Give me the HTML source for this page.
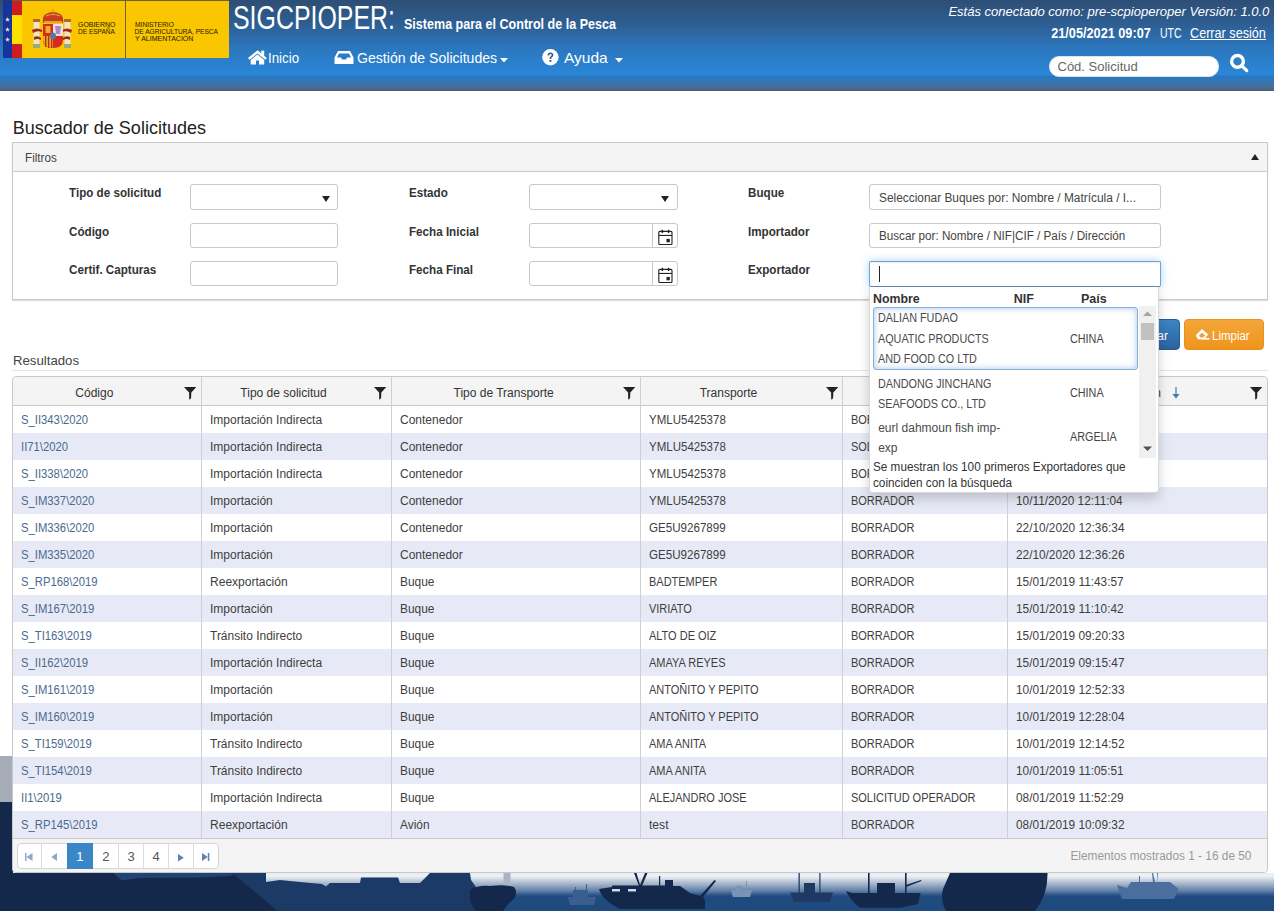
<!DOCTYPE html>
<html><head><meta charset="utf-8">
<style>
*{box-sizing:border-box}
html,body{margin:0;padding:0}
body{width:1274px;height:911px;overflow:hidden;position:relative;background:#fff;font-family:"Liberation Sans",sans-serif;color:#333}
.abs{position:absolute}
.t{position:absolute;white-space:nowrap;line-height:1}
svg{position:absolute;overflow:visible}
</style></head><body>
<div class="abs" style="left:0px;top:0px;width:1274px;height:911px;background:#fff"></div>
<svg style="left:0;top:740px" width="1274" height="171" viewBox="0 740 1274 171">
<defs>
<linearGradient id="sea" gradientUnits="userSpaceOnUse" x1="0" y1="873" x2="0" y2="897">
<stop offset="0" stop-color="#e9ecef"/>
<stop offset="0.125" stop-color="#eef2f8"/>
<stop offset="0.208" stop-color="#dde3eb"/>
<stop offset="0.333" stop-color="#c0cad8"/>
<stop offset="0.542" stop-color="#90a4c0"/>
<stop offset="0.75" stop-color="#5f7fa6"/>
<stop offset="0.917" stop-color="#2c5389"/>
<stop offset="1" stop-color="#1f4a7e"/>
</linearGradient>
</defs>
<rect x="0" y="873" width="1274" height="38" fill="url(#sea)"/>
<rect x="0" y="756" width="13" height="46" fill="#a5acb8"/>
<rect x="0" y="802" width="13" height="109" fill="#13284a"/>
<!-- left buildings light navy -->
<path d="M0,873 L256,873 L266,873 L266,882 L280,880 L300,882 L322,884 L326,886.5 L330,883 L360,883 L361,877.5 L398,877.5 L400,883 L420,883 L430,873 L470,873 L471,880 L476,887 L480,911 L0,911 Z" fill="#1b3a66"/>
<path d="M0,873 L232,873 L277.5,911 L0,911 Z" fill="#13284a"/>
<path d="M113,873 L236,873 L230,876 L200,877.5 L140,878 L122,880.5 Z" fill="#1f4474"/>
<!-- dark rock with lighthouse -->
<rect x="503.5" y="873" width="7" height="15" fill="#a9b4c4"/>
<path d="M470,890 Q478,885 490,886 Q505,884 514,887 Q518,892 514,899 Q508,903 503,911 L476,911 Q470,905 470,898 Z" fill="#13284a"/>
<!-- faint ships -->
<path d="M568,897 L596,897 L594,905 L570,905 Z M573,890 L588,890 L588,897 L573,897 Z M575,887 L576,887 L576,897 L575,897 Z M586,884 L587,884 L587,897 L586,897 Z" fill="#3a5e90"/>
<path d="M731,890 L752,890 L750,897 L733,897 Z M746,881 L747,881 L747,890 L746,890 Z M736,886 L742,886 L742,890 L736,890 Z" fill="#7a94b8"/>
<!-- big ship -->
<path d="M599,889 L612,887 L612,885.5 L665,885.5 L665,880 L673,880 L673,886 L680,886 L690,893 L700,896 L714.5,880 L716,881 L703,897 L705,900 L705,909 L620,909 Q602,900 599,889 Z" fill="#13284a"/>
<path d="M634,873 L636.5,873 L640,885 L645,873 L647.5,873 L642,886 L639,886 Z" fill="#13284a"/>
<rect x="659" y="876" width="1.2" height="10" fill="#13284a"/>
<rect x="612" y="889" width="8" height="2.5" fill="#cfd8e4"/>
<rect x="628" y="889" width="8" height="2.5" fill="#cfd8e4"/>
<!-- boat 1 -->
<path d="M790,892.5 L833,892.5 L830,901.7 L794,901.7 Z M804,883 L815,883 L815,892.5 L804,892.5 Z" fill="#1e3a64"/>
<rect x="798.5" y="873" width="1.3" height="20" fill="#1e3a64"/>
<rect x="819.3" y="873" width="1.2" height="20" fill="#1e3a64"/>
<!-- boat 2 -->
<path d="M846,891 L852,893 L920.6,893 L918,904 L900,907.8 L860,907.8 Q850,900 846,891 Z M877,883 L895,883 L895,893 L877,893 Z" fill="#13284a"/>
<rect x="868" y="873" width="1.6" height="20" fill="#13284a"/>
<rect x="905" y="873" width="1.6" height="20" fill="#13284a"/>
<path d="M906,885 L921,880 L921.5,881 L906,887 Z" fill="#13284a"/>
<!-- big bow -->
<path d="M950,873 L1047.5,873 Q1048,895 1035,911 L946,911 Q940,900 943,889 Z" fill="#13284a"/>
<!-- faint ship right -->
<path d="M1117,885 L1127,888 L1131,882 L1170,882 L1178.6,889 L1174,899 L1122,899 Z M1152,873 L1153,873 L1155,882 L1153,882 Z M1157,873 L1158,873 L1157,882 Z M1139,876 L1140,876 L1140,882 L1139,882 Z" fill="#4a6e9e"/>
</svg>
<div class="abs" style="left:0px;top:0px;width:1274px;height:91px;background:linear-gradient(to bottom,#2e4e74 0px,#2e5f94 25px,#2b78c0 50px,#2a87d8 75px,#2678c4 76px,#3f73a8 84px,#4a6a90 89px,#505a66 90px,#505a66 91px)"></div>
<div class="abs" style="left:3px;top:0px;width:226px;height:58px;background:#f9c600;border-top:1px solid #6a6230"></div>
<div class="abs" style="left:3px;top:0px;width:9px;height:58px;background:#17349c;border-top:1px solid #303858"></div>
<div class="abs" style="left:12px;top:1px;width:10px;height:14px;background:#cf1c20"></div>
<div class="abs" style="left:12px;top:15px;width:10px;height:29px;background:#fde000"></div>
<div class="abs" style="left:12px;top:44px;width:10px;height:14px;background:#cf1c20"></div>
<div class="abs" style="left:125px;top:1px;width:1px;height:57px;background:#6a6230"></div>
<svg style="left:5px;top:16.5px" width="5" height="5" viewBox="0 0 10 10"><polygon points="5,0 6.2,3.6 10,3.7 7,6 8.1,9.6 5,7.5 1.9,9.6 3,6 0,3.7 3.8,3.6" fill="#e0e8c8"/></svg>
<svg style="left:5px;top:26.5px" width="5" height="5" viewBox="0 0 10 10"><polygon points="5,0 6.2,3.6 10,3.7 7,6 8.1,9.6 5,7.5 1.9,9.6 3,6 0,3.7 3.8,3.6" fill="#e0e8c8"/></svg>
<svg style="left:5px;top:36.5px" width="5" height="5" viewBox="0 0 10 10"><polygon points="5,0 6.2,3.6 10,3.7 7,6 8.1,9.6 5,7.5 1.9,9.6 3,6 0,3.7 3.8,3.6" fill="#e0e8c8"/></svg>
<svg style="left:32px;top:8px" width="42" height="42" viewBox="0 0 42 42">
<rect x="1.5" y="13" width="6" height="26" fill="#efe4c4"/>
<rect x="32.5" y="13" width="6" height="26" fill="#efe4c4"/>
<rect x="1" y="11" width="7" height="3" fill="#b06a30"/>
<rect x="32" y="11" width="7" height="3" fill="#b06a30"/>
<rect x="1" y="36" width="7" height="4" fill="#98ac80"/>
<rect x="32" y="36" width="7" height="4" fill="#98ac80"/>
<path d="M0,22 Q5,19 10,22 L10,24 Q5,22 1,25 Z M2,29 Q6,27 9,30 L9,32 Q5,30 2,32 Z" fill="#a02818"/>
<path d="M40,22 Q35,19 30,22 L30,24 Q35,22 39,25 Z M38,29 Q34,27 31,30 L31,32 Q35,30 38,32 Z" fill="#a02818"/>
<path d="M11,15 Q10,8 14,6 Q21,2 28,6 Q32,8 31,15 Z" fill="#c83c22"/>
<path d="M12,13 L30,13 L30,15 L12,15 Z" fill="#e8a030"/>
<path d="M14,8 Q21,5 28,8" fill="none" stroke="#e8b040" stroke-width="1.2"/>
<rect x="20.5" y="1.5" width="1.2" height="4" fill="#c8902a"/>
<path d="M11,16 L31,16 L31,32 Q31,40 21,40 Q11,40 11,32 Z" fill="#d42a20"/>
<rect x="21" y="16" width="10" height="12" fill="#f0e0ea"/>
<path d="M23,18 L29,18 L28,26 L24,26 Z" fill="#b088c0"/>
<rect x="13.5" y="18" width="5" height="7" fill="#e8b030"/>
<path d="M11,28 L21,28 L21,40 Q12,40 11,32 Z" fill="#e8a828"/>
<rect x="13" y="28" width="1.3" height="11" fill="#c02a1a"/>
<rect x="16" y="28" width="1.3" height="12" fill="#c02a1a"/>
<rect x="19" y="28" width="1.3" height="12" fill="#c02a1a"/>
<ellipse cx="21" cy="28" rx="3" ry="3.4" fill="#5a7a9a"/>
</svg>
<div class="t" style="left:78.3px;top:21.81px;font-size:6.6px;color:#2e2600;font-weight:normal;font-style:normal;transform:scaleX(1.053);transform-origin:0 0;-webkit-text-stroke:0.05px #2e2400">GOBIERNO</div>
<div class="t" style="left:78.3px;top:29.21px;font-size:6.6px;color:#2e2600;font-weight:normal;font-style:normal;transform:scaleX(0.99);transform-origin:0 0;-webkit-text-stroke:0.05px #2e2400">DE ESPAÑA</div>
<div class="t" style="left:134.6px;top:21.81px;font-size:6.6px;color:#2e2600;font-weight:normal;font-style:normal;transform:scaleX(1.01);transform-origin:0 0;-webkit-text-stroke:0.05px #2e2400">MINISTERIO</div>
<div class="t" style="left:134.6px;top:29.21px;font-size:6.6px;color:#2e2600;font-weight:normal;font-style:normal;transform:scaleX(1.0);transform-origin:0 0;-webkit-text-stroke:0.05px #2e2400">DE AGRICULTURA, PESCA</div>
<div class="t" style="left:134.6px;top:36.31px;font-size:6.6px;color:#2e2600;font-weight:normal;font-style:normal;transform:scaleX(1.068);transform-origin:0 0;-webkit-text-stroke:0.05px #2e2400">Y ALIMENTACIÓN</div>
<div class="t" style="left:232.5px;top:1.27px;font-size:33px;color:#fff;font-weight:normal;font-style:normal;transform:scaleX(0.7552447552447552);transform-origin:0 0;">SIGCPIOPER:</div>
<div class="t" style="left:404px;top:16.18px;font-size:15.5px;color:#fff;font-weight:bold;font-style:normal;transform:scaleX(0.8091603053435115);transform-origin:0 0;">Sistema para el Control de la Pesca</div>
<svg style="left:248px;top:49.5px" width="19" height="15" viewBox="0 0 19 15">
<path d="M0,8 L9.6,0.2 L18.8,8 L17.3,9.7 L9.6,3.4 L1.6,9.7 Z" fill="#fff"/>
<rect x="13.2" y="0.6" width="3" height="5" fill="#fff"/>
<path d="M2.7,10 L9.6,4.4 L16.2,10 L16.2,14.5 L11,14.5 L11,10.6 L8,10.6 L8,14.5 L2.7,14.5 Z" fill="#fff"/>
</svg>
<div class="t" style="left:267.8px;top:50.30px;font-size:15px;color:#fff;font-weight:normal;font-style:normal;transform:scaleX(0.8857142857142857);transform-origin:0 0;">Inicio</div>
<svg style="left:334px;top:50.6px" width="20" height="14" viewBox="0 0 20 14">
<path d="M4,0 L16,0 L19.5,6.5 L19.5,13 L0.5,13 L0.5,6.5 Z M5,2.5 L3,6.5 L7,6.5 L8,8.5 L12,8.5 L13,6.5 L17,6.5 L15,2.5 Z" fill="#fff" fill-rule="evenodd"/>
</svg>
<div class="t" style="left:356.8px;top:50.30px;font-size:15px;color:#fff;font-weight:normal;font-style:normal;transform:scaleX(0.9390488948425987);transform-origin:0 0;">Gestión de Solicitudes</div>
<svg style="left:499.5px;top:57.5px" width="8" height="5" viewBox="0 0 8 5"><path d="M0,0 L8,0 L4,4.5 Z" fill="#fff"/></svg>
<svg style="left:541.5px;top:48.8px" width="17" height="17" viewBox="0 0 17 17">
<circle cx="8.4" cy="8.2" r="8.2" fill="#fff"/>
<path d="M5.6,6.4 Q5.6,3.4 8.5,3.4 Q11.4,3.4 11.4,6 Q11.4,7.6 9.6,8.5 Q9.3,8.8 9.3,10 L7.6,10 Q7.5,8.2 8.6,7.4 Q9.6,6.8 9.6,6 Q9.6,5 8.5,5 Q7.4,5 7.3,6.4 Z" fill="#2f5f8a"/>
<rect x="7.5" y="11" width="1.9" height="1.9" fill="#2f5f8a"/>
</svg>
<div class="t" style="left:563.8px;top:50.30px;font-size:15px;color:#fff;font-weight:normal;font-style:normal;transform:scaleX(1.0354609929078014);transform-origin:0 0;">Ayuda</div>
<svg style="left:615px;top:57.5px" width="8" height="5" viewBox="0 0 8 5"><path d="M0,0 L8,0 L4,4.5 Z" fill="#fff"/></svg>
<div class="t" style="right:5px;top:4.70px;font-size:13px;color:#fff;font-weight:normal;font-style:italic;transform:scaleX(1.00187265917603);transform-origin:100% 0;">Estás conectado como: pre-scpioperoper Versión: 1.0.0</div>
<div class="t" style="right:123px;top:26.15px;font-size:14px;color:#fff;font-weight:bold;font-style:normal;transform:scaleX(0.907103825136612);transform-origin:100% 0;">21/05/2021 09:07</div>
<div class="t" style="left:1160px;top:26.15px;font-size:14px;color:#fff;font-weight:normal;font-style:normal;transform:scaleX(0.7491961414790996);transform-origin:0 0;">UTC</div>
<div class="t" style="left:1190.4px;top:25.30px;font-size:15px;color:#fff;font-weight:normal;font-style:normal;transform:scaleX(0.8429661941112322);transform-origin:0 0;text-decoration:underline">Cerrar sesión</div>
<div class="abs" style="left:1049px;top:56px;width:170px;height:21px;background:#fff;border-radius:10px;border:1px solid #d8e4ee"></div>
<div class="t" style="left:1057.5px;top:59.70px;font-size:13px;color:#666;font-weight:normal;font-style:normal;">Cód. Solicitud</div>
<svg style="left:1229px;top:53px" width="20" height="20" viewBox="0 0 20 20">
<circle cx="8.5" cy="8.4" r="5.9" fill="none" stroke="#fff" stroke-width="3.4"/>
<path d="M12.6,12.6 L17.8,17.6" stroke="#fff" stroke-width="3.2" stroke-linecap="round"/>
</svg>
<div class="t" style="left:12.8px;top:118.76px;font-size:18px;color:#222;font-weight:normal;font-style:normal;">Buscador de Solicitudes</div>
<div class="abs" style="left:12px;top:142px;width:1256px;height:158px;background:#fff;border:1px solid #c8c8c8;border-radius:0;box-shadow:0 1px 1px rgba(0,0,0,.12)"></div>
<div class="abs" style="left:13px;top:143px;width:1254px;height:29px;background:#f4f4f4;border-bottom:1px solid #c8c8c8"></div>
<div class="t" style="left:25.4px;top:151.84px;font-size:12px;color:#444;font-weight:normal;font-style:normal;transform:scaleX(0.9724770642201834);transform-origin:0 0;">Filtros</div>
<svg style="left:1251px;top:154px" width="8" height="6" viewBox="0 0 8 6"><path d="M0,6 L8,6 L4,0 Z" fill="#222"/></svg>
<div class="t" style="left:69.3px;top:186.84px;font-size:12px;color:#333;font-weight:bold;font-style:normal;transform:scaleX(0.97);transform-origin:0 0;">Tipo de solicitud</div>
<div class="t" style="left:69.3px;top:225.84px;font-size:12px;color:#333;font-weight:bold;font-style:normal;transform:scaleX(0.97);transform-origin:0 0;">Código</div>
<div class="t" style="left:69.3px;top:263.84px;font-size:12px;color:#333;font-weight:bold;font-style:normal;transform:scaleX(0.97);transform-origin:0 0;">Certif. Capturas</div>
<div class="t" style="left:409px;top:186.84px;font-size:12px;color:#333;font-weight:bold;font-style:normal;transform:scaleX(0.97);transform-origin:0 0;">Estado</div>
<div class="t" style="left:409px;top:225.84px;font-size:12px;color:#333;font-weight:bold;font-style:normal;transform:scaleX(0.97);transform-origin:0 0;">Fecha Inicial</div>
<div class="t" style="left:409px;top:263.84px;font-size:12px;color:#333;font-weight:bold;font-style:normal;transform:scaleX(0.97);transform-origin:0 0;">Fecha Final</div>
<div class="t" style="left:748.4px;top:186.84px;font-size:12px;color:#333;font-weight:bold;font-style:normal;transform:scaleX(0.97);transform-origin:0 0;">Buque</div>
<div class="t" style="left:748.4px;top:225.84px;font-size:12px;color:#333;font-weight:bold;font-style:normal;transform:scaleX(0.97);transform-origin:0 0;">Importador</div>
<div class="t" style="left:748.4px;top:263.84px;font-size:12px;color:#333;font-weight:bold;font-style:normal;transform:scaleX(0.97);transform-origin:0 0;">Exportador</div>
<div class="abs" style="left:190px;top:184px;width:148px;height:26px;background:#fff;border:1px solid #c8c8c8;border-radius:3px;"></div>
<svg style="left:321.5px;top:196px" width="8" height="6" viewBox="0 0 8 6"><path d="M0,0 L8,0 L4,6 Z" fill="#222"/></svg>
<div class="abs" style="left:190px;top:223px;width:148px;height:25px;background:#fff;border:1px solid #c8c8c8;border-radius:3px;"></div>
<div class="abs" style="left:190px;top:261px;width:148px;height:25px;background:#fff;border:1px solid #c8c8c8;border-radius:3px;"></div>
<div class="abs" style="left:529px;top:184px;width:149px;height:26px;background:#fff;border:1px solid #c8c8c8;border-radius:3px;"></div>
<svg style="left:661px;top:196px" width="8" height="6" viewBox="0 0 8 6"><path d="M0,0 L8,0 L4,6 Z" fill="#222"/></svg>
<div class="abs" style="left:529px;top:223px;width:149px;height:25px;background:#fff;border:1px solid #c8c8c8;border-radius:3px;"></div>
<div class="abs" style="left:652px;top:224px;width:1px;height:23px;background:#c8c8c8"></div>
<svg style="left:658px;top:229px" width="16" height="17" viewBox="0 0 16 17">
<rect x="0.8" y="2.4" width="13.2" height="13.1" rx="1" fill="none" stroke="#222" stroke-width="1.1"/>
<rect x="0.8" y="5.9" width="13.2" height="1.1" fill="#222"/>
<rect x="3.6" y="0.8" width="1.5" height="3.2" rx="0.6" fill="#222"/>
<rect x="9.8" y="0.8" width="1.5" height="3.2" rx="0.6" fill="#222"/>
<rect x="8.5" y="9.9" width="3.3" height="3.4" fill="#222"/>
</svg>
<div class="abs" style="left:529px;top:261px;width:149px;height:25px;background:#fff;border:1px solid #c8c8c8;border-radius:3px;"></div>
<div class="abs" style="left:652px;top:262px;width:1px;height:23px;background:#c8c8c8"></div>
<svg style="left:658px;top:267px" width="16" height="17" viewBox="0 0 16 17">
<rect x="0.8" y="2.4" width="13.2" height="13.1" rx="1" fill="none" stroke="#222" stroke-width="1.1"/>
<rect x="0.8" y="5.9" width="13.2" height="1.1" fill="#222"/>
<rect x="3.6" y="0.8" width="1.5" height="3.2" rx="0.6" fill="#222"/>
<rect x="9.8" y="0.8" width="1.5" height="3.2" rx="0.6" fill="#222"/>
<rect x="8.5" y="9.9" width="3.3" height="3.4" fill="#222"/>
</svg>
<div class="abs" style="left:869px;top:184px;width:292px;height:26px;background:#fff;border:1px solid #c8c8c8;border-radius:3px;"></div>
<div class="t" style="left:879.4px;top:191.84px;font-size:12px;color:#444;font-weight:normal;font-style:normal;transform:scaleX(0.9903660886319846);transform-origin:0 0;">Seleccionar Buques por: Nombre / Matrícula / I...</div>
<div class="abs" style="left:869px;top:223px;width:292px;height:25px;background:#fff;border:1px solid #c8c8c8;border-radius:3px;"></div>
<div class="t" style="left:879.4px;top:230.34px;font-size:12px;color:#444;font-weight:normal;font-style:normal;transform:scaleX(0.9727488151658769);transform-origin:0 0;">Buscar por: Nombre / NIF|CIF / País / Dirección</div>
<div class="abs" style="left:869px;top:261px;width:292px;height:26px;background:#fff;border:1px solid #72a2d0;border-bottom-color:#5f86b0;border-radius:2px;box-shadow:inset 0 1px 1px rgba(0,0,0,.075),0 0 8px rgba(102,175,233,.55)"></div>
<div class="abs" style="left:879px;top:266px;width:1px;height:16px;background:#222"></div>
<div class="abs" style="left:1080px;top:319px;width:100px;height:31px;background:linear-gradient(#3c86c6,#2a62a0);border:1px solid #2a5a90;border-radius:4px"></div>
<div class="t" style="right:106.5px;top:329.72px;font-size:12.5px;color:#fff;font-weight:normal;font-style:normal;transform:scaleX(0.95);transform-origin:100% 0;">Buscar</div>
<div class="abs" style="left:1184px;top:319px;width:80px;height:31px;background:linear-gradient(#f4a63a,#ee951c);border:1px solid #e89020;border-radius:4px"></div>
<svg style="left:1195px;top:328px" width="15" height="13" viewBox="0 0 15 13">
<path d="M7,1 L13.2,6.6 L9,11.2 L3,11.2 L0.8,7.2 Z" fill="#fff"/>
<path d="M4,7.6 L7,4.8 L10.2,7.6 L8.2,9.6 L5.2,9.6 Z" fill="#e8a040"/>
<rect x="7" y="10" width="7.5" height="1.6" fill="#fff"/>
</svg>
<div class="t" style="left:1212.3px;top:329.72px;font-size:12.5px;color:#fff;font-weight:normal;font-style:normal;transform:scaleX(0.9182692307692308);transform-origin:0 0;">Limpiar</div>
<div class="t" style="left:12.5px;top:354.00px;font-size:13px;color:#444;font-weight:normal;font-style:normal;transform:scaleX(1.0153846153846153);transform-origin:0 0;">Resultados</div>
<div class="abs" style="left:12px;top:370px;width:1256px;height:1px;background:#e4e4e4"></div>
<div class="abs" style="left:12px;top:376px;width:1256px;height:497px;background:#fff;border:1px solid #c8c8c8;border-radius:4px"></div>
<div class="abs" style="left:13px;top:377px;width:1254px;height:29px;background:#f4f4f4;border-bottom:1px solid #c8c8c8;border-radius:4px 4px 0 0"></div>
<div class="t" style="left:20.5px;top:414.34px;font-size:12px;color:#4a6a8e;font-weight:normal;font-style:normal;transform:scaleX(0.94);transform-origin:0 0;">S_II343\2020</div>
<div class="t" style="left:209.5px;top:414.34px;font-size:12px;color:#3e3e3e;font-weight:normal;font-style:normal;transform:scaleX(1.0005000000000002);transform-origin:0 0;">Importación Indirecta</div>
<div class="t" style="left:399.5px;top:414.34px;font-size:12px;color:#3e3e3e;font-weight:normal;font-style:normal;transform:scaleX(1.0005);transform-origin:0 0;">Contenedor</div>
<div class="t" style="left:648.5px;top:414.34px;font-size:12px;color:#3e3e3e;font-weight:normal;font-style:normal;transform:scaleX(0.9595454545454545);transform-origin:0 0;">YMLU5425378</div>
<div class="t" style="left:850.5px;top:414.34px;font-size:12px;color:#3e3e3e;font-weight:normal;font-style:normal;transform:scaleX(0.915);transform-origin:0 0;">BORRADOR</div>
<div class="t" style="left:1015.5px;top:414.34px;font-size:12px;color:#3e3e3e;font-weight:normal;font-style:normal;transform:scaleX(0.9849999999999998);transform-origin:0 0;">10/11/2020 12:58:13</div>
<div class="abs" style="left:13px;top:433px;width:1254px;height:27px;background:#e7eaf6"></div>
<div class="t" style="left:20.5px;top:441.34px;font-size:12px;color:#4a6a8e;font-weight:normal;font-style:normal;transform:scaleX(0.94);transform-origin:0 0;">II71\2020</div>
<div class="t" style="left:209.5px;top:441.34px;font-size:12px;color:#3e3e3e;font-weight:normal;font-style:normal;transform:scaleX(1.0005000000000002);transform-origin:0 0;">Importación Indirecta</div>
<div class="t" style="left:399.5px;top:441.34px;font-size:12px;color:#3e3e3e;font-weight:normal;font-style:normal;transform:scaleX(1.0005);transform-origin:0 0;">Contenedor</div>
<div class="t" style="left:648.5px;top:441.34px;font-size:12px;color:#3e3e3e;font-weight:normal;font-style:normal;transform:scaleX(0.9595454545454545);transform-origin:0 0;">YMLU5425378</div>
<div class="t" style="left:850.5px;top:441.34px;font-size:12px;color:#3e3e3e;font-weight:normal;font-style:normal;transform:scaleX(0.9149999999999996);transform-origin:0 0;">SOLICITUD OPERADOR</div>
<div class="t" style="left:1015.5px;top:441.34px;font-size:12px;color:#3e3e3e;font-weight:normal;font-style:normal;transform:scaleX(0.9849999999999998);transform-origin:0 0;">10/11/2020 12:40:01</div>
<div class="t" style="left:20.5px;top:468.34px;font-size:12px;color:#4a6a8e;font-weight:normal;font-style:normal;transform:scaleX(0.94);transform-origin:0 0;">S_II338\2020</div>
<div class="t" style="left:209.5px;top:468.34px;font-size:12px;color:#3e3e3e;font-weight:normal;font-style:normal;transform:scaleX(1.0005000000000002);transform-origin:0 0;">Importación Indirecta</div>
<div class="t" style="left:399.5px;top:468.34px;font-size:12px;color:#3e3e3e;font-weight:normal;font-style:normal;transform:scaleX(1.0005);transform-origin:0 0;">Contenedor</div>
<div class="t" style="left:648.5px;top:468.34px;font-size:12px;color:#3e3e3e;font-weight:normal;font-style:normal;transform:scaleX(0.9595454545454545);transform-origin:0 0;">YMLU5425378</div>
<div class="t" style="left:850.5px;top:468.34px;font-size:12px;color:#3e3e3e;font-weight:normal;font-style:normal;transform:scaleX(0.915);transform-origin:0 0;">BORRADOR</div>
<div class="t" style="left:1015.5px;top:468.34px;font-size:12px;color:#3e3e3e;font-weight:normal;font-style:normal;transform:scaleX(0.9849999999999998);transform-origin:0 0;">10/11/2020 12:20:44</div>
<div class="abs" style="left:13px;top:487px;width:1254px;height:27px;background:#e7eaf6"></div>
<div class="t" style="left:20.5px;top:495.34px;font-size:12px;color:#4a6a8e;font-weight:normal;font-style:normal;transform:scaleX(0.94);transform-origin:0 0;">S_IM337\2020</div>
<div class="t" style="left:209.5px;top:495.34px;font-size:12px;color:#3e3e3e;font-weight:normal;font-style:normal;transform:scaleX(1.0013636363636362);transform-origin:0 0;">Importación</div>
<div class="t" style="left:399.5px;top:495.34px;font-size:12px;color:#3e3e3e;font-weight:normal;font-style:normal;transform:scaleX(1.0005);transform-origin:0 0;">Contenedor</div>
<div class="t" style="left:648.5px;top:495.34px;font-size:12px;color:#3e3e3e;font-weight:normal;font-style:normal;transform:scaleX(0.9595454545454545);transform-origin:0 0;">YMLU5425378</div>
<div class="t" style="left:850.5px;top:495.34px;font-size:12px;color:#3e3e3e;font-weight:normal;font-style:normal;transform:scaleX(0.915);transform-origin:0 0;">BORRADOR</div>
<div class="t" style="left:1015.5px;top:495.34px;font-size:12px;color:#3e3e3e;font-weight:normal;font-style:normal;transform:scaleX(0.9849999999999998);transform-origin:0 0;">10/11/2020 12:11:04</div>
<div class="t" style="left:20.5px;top:522.34px;font-size:12px;color:#4a6a8e;font-weight:normal;font-style:normal;transform:scaleX(0.94);transform-origin:0 0;">S_IM336\2020</div>
<div class="t" style="left:209.5px;top:522.34px;font-size:12px;color:#3e3e3e;font-weight:normal;font-style:normal;transform:scaleX(1.0013636363636362);transform-origin:0 0;">Importación</div>
<div class="t" style="left:399.5px;top:522.34px;font-size:12px;color:#3e3e3e;font-weight:normal;font-style:normal;transform:scaleX(1.0005);transform-origin:0 0;">Contenedor</div>
<div class="t" style="left:648.5px;top:522.34px;font-size:12px;color:#3e3e3e;font-weight:normal;font-style:normal;transform:scaleX(0.9659090909090909);transform-origin:0 0;">GE5U9267899</div>
<div class="t" style="left:850.5px;top:522.34px;font-size:12px;color:#3e3e3e;font-weight:normal;font-style:normal;transform:scaleX(0.915);transform-origin:0 0;">BORRADOR</div>
<div class="t" style="left:1015.5px;top:522.34px;font-size:12px;color:#3e3e3e;font-weight:normal;font-style:normal;transform:scaleX(0.9849999999999998);transform-origin:0 0;">22/10/2020 12:36:34</div>
<div class="abs" style="left:13px;top:541px;width:1254px;height:27px;background:#e7eaf6"></div>
<div class="t" style="left:20.5px;top:549.34px;font-size:12px;color:#4a6a8e;font-weight:normal;font-style:normal;transform:scaleX(0.94);transform-origin:0 0;">S_IM335\2020</div>
<div class="t" style="left:209.5px;top:549.34px;font-size:12px;color:#3e3e3e;font-weight:normal;font-style:normal;transform:scaleX(1.0013636363636362);transform-origin:0 0;">Importación</div>
<div class="t" style="left:399.5px;top:549.34px;font-size:12px;color:#3e3e3e;font-weight:normal;font-style:normal;transform:scaleX(1.0005);transform-origin:0 0;">Contenedor</div>
<div class="t" style="left:648.5px;top:549.34px;font-size:12px;color:#3e3e3e;font-weight:normal;font-style:normal;transform:scaleX(0.9659090909090909);transform-origin:0 0;">GE5U9267899</div>
<div class="t" style="left:850.5px;top:549.34px;font-size:12px;color:#3e3e3e;font-weight:normal;font-style:normal;transform:scaleX(0.915);transform-origin:0 0;">BORRADOR</div>
<div class="t" style="left:1015.5px;top:549.34px;font-size:12px;color:#3e3e3e;font-weight:normal;font-style:normal;transform:scaleX(0.9849999999999998);transform-origin:0 0;">22/10/2020 12:36:26</div>
<div class="t" style="left:20.5px;top:576.34px;font-size:12px;color:#4a6a8e;font-weight:normal;font-style:normal;transform:scaleX(0.94);transform-origin:0 0;">S_RP168\2019</div>
<div class="t" style="left:209.5px;top:576.34px;font-size:12px;color:#3e3e3e;font-weight:normal;font-style:normal;transform:scaleX(1.0026923076923075);transform-origin:0 0;">Reexportación</div>
<div class="t" style="left:399.5px;top:576.34px;font-size:12px;color:#3e3e3e;font-weight:normal;font-style:normal;transform:scaleX(0.991);transform-origin:0 0;">Buque</div>
<div class="t" style="left:648.5px;top:576.34px;font-size:12px;color:#3e3e3e;font-weight:normal;font-style:normal;transform:scaleX(0.9149999999999999);transform-origin:0 0;">BADTEMPER</div>
<div class="t" style="left:850.5px;top:576.34px;font-size:12px;color:#3e3e3e;font-weight:normal;font-style:normal;transform:scaleX(0.915);transform-origin:0 0;">BORRADOR</div>
<div class="t" style="left:1015.5px;top:576.34px;font-size:12px;color:#3e3e3e;font-weight:normal;font-style:normal;transform:scaleX(0.9849999999999998);transform-origin:0 0;">15/01/2019 11:43:57</div>
<div class="abs" style="left:13px;top:595px;width:1254px;height:27px;background:#e7eaf6"></div>
<div class="t" style="left:20.5px;top:603.34px;font-size:12px;color:#4a6a8e;font-weight:normal;font-style:normal;transform:scaleX(0.94);transform-origin:0 0;">S_IM167\2019</div>
<div class="t" style="left:209.5px;top:603.34px;font-size:12px;color:#3e3e3e;font-weight:normal;font-style:normal;transform:scaleX(1.0013636363636362);transform-origin:0 0;">Importación</div>
<div class="t" style="left:399.5px;top:603.34px;font-size:12px;color:#3e3e3e;font-weight:normal;font-style:normal;transform:scaleX(0.991);transform-origin:0 0;">Buque</div>
<div class="t" style="left:648.5px;top:603.34px;font-size:12px;color:#3e3e3e;font-weight:normal;font-style:normal;transform:scaleX(0.915);transform-origin:0 0;">VIRIATO</div>
<div class="t" style="left:850.5px;top:603.34px;font-size:12px;color:#3e3e3e;font-weight:normal;font-style:normal;transform:scaleX(0.915);transform-origin:0 0;">BORRADOR</div>
<div class="t" style="left:1015.5px;top:603.34px;font-size:12px;color:#3e3e3e;font-weight:normal;font-style:normal;transform:scaleX(0.9849999999999998);transform-origin:0 0;">15/01/2019 11:10:42</div>
<div class="t" style="left:20.5px;top:630.34px;font-size:12px;color:#4a6a8e;font-weight:normal;font-style:normal;transform:scaleX(0.94);transform-origin:0 0;">S_TI163\2019</div>
<div class="t" style="left:209.5px;top:630.34px;font-size:12px;color:#3e3e3e;font-weight:normal;font-style:normal;transform:scaleX(0.9988235294117646);transform-origin:0 0;">Tránsito Indirecto</div>
<div class="t" style="left:399.5px;top:630.34px;font-size:12px;color:#3e3e3e;font-weight:normal;font-style:normal;transform:scaleX(0.991);transform-origin:0 0;">Buque</div>
<div class="t" style="left:648.5px;top:630.34px;font-size:12px;color:#3e3e3e;font-weight:normal;font-style:normal;transform:scaleX(0.9149999999999999);transform-origin:0 0;">ALTO DE OIZ</div>
<div class="t" style="left:850.5px;top:630.34px;font-size:12px;color:#3e3e3e;font-weight:normal;font-style:normal;transform:scaleX(0.915);transform-origin:0 0;">BORRADOR</div>
<div class="t" style="left:1015.5px;top:630.34px;font-size:12px;color:#3e3e3e;font-weight:normal;font-style:normal;transform:scaleX(0.9849999999999998);transform-origin:0 0;">15/01/2019 09:20:33</div>
<div class="abs" style="left:13px;top:649px;width:1254px;height:27px;background:#e7eaf6"></div>
<div class="t" style="left:20.5px;top:657.34px;font-size:12px;color:#4a6a8e;font-weight:normal;font-style:normal;transform:scaleX(0.94);transform-origin:0 0;">S_II162\2019</div>
<div class="t" style="left:209.5px;top:657.34px;font-size:12px;color:#3e3e3e;font-weight:normal;font-style:normal;transform:scaleX(1.0005000000000002);transform-origin:0 0;">Importación Indirecta</div>
<div class="t" style="left:399.5px;top:657.34px;font-size:12px;color:#3e3e3e;font-weight:normal;font-style:normal;transform:scaleX(0.991);transform-origin:0 0;">Buque</div>
<div class="t" style="left:648.5px;top:657.34px;font-size:12px;color:#3e3e3e;font-weight:normal;font-style:normal;transform:scaleX(0.9149999999999998);transform-origin:0 0;">AMAYA REYES</div>
<div class="t" style="left:850.5px;top:657.34px;font-size:12px;color:#3e3e3e;font-weight:normal;font-style:normal;transform:scaleX(0.915);transform-origin:0 0;">BORRADOR</div>
<div class="t" style="left:1015.5px;top:657.34px;font-size:12px;color:#3e3e3e;font-weight:normal;font-style:normal;transform:scaleX(0.9849999999999998);transform-origin:0 0;">15/01/2019 09:15:47</div>
<div class="t" style="left:20.5px;top:684.34px;font-size:12px;color:#4a6a8e;font-weight:normal;font-style:normal;transform:scaleX(0.94);transform-origin:0 0;">S_IM161\2019</div>
<div class="t" style="left:209.5px;top:684.34px;font-size:12px;color:#3e3e3e;font-weight:normal;font-style:normal;transform:scaleX(1.0013636363636362);transform-origin:0 0;">Importación</div>
<div class="t" style="left:399.5px;top:684.34px;font-size:12px;color:#3e3e3e;font-weight:normal;font-style:normal;transform:scaleX(0.991);transform-origin:0 0;">Buque</div>
<div class="t" style="left:648.5px;top:684.34px;font-size:12px;color:#3e3e3e;font-weight:normal;font-style:normal;transform:scaleX(0.9149999999999996);transform-origin:0 0;">ANTOÑITO Y PEPITO</div>
<div class="t" style="left:850.5px;top:684.34px;font-size:12px;color:#3e3e3e;font-weight:normal;font-style:normal;transform:scaleX(0.915);transform-origin:0 0;">BORRADOR</div>
<div class="t" style="left:1015.5px;top:684.34px;font-size:12px;color:#3e3e3e;font-weight:normal;font-style:normal;transform:scaleX(0.9849999999999998);transform-origin:0 0;">10/01/2019 12:52:33</div>
<div class="abs" style="left:13px;top:703px;width:1254px;height:27px;background:#e7eaf6"></div>
<div class="t" style="left:20.5px;top:711.34px;font-size:12px;color:#4a6a8e;font-weight:normal;font-style:normal;transform:scaleX(0.94);transform-origin:0 0;">S_IM160\2019</div>
<div class="t" style="left:209.5px;top:711.34px;font-size:12px;color:#3e3e3e;font-weight:normal;font-style:normal;transform:scaleX(1.0013636363636362);transform-origin:0 0;">Importación</div>
<div class="t" style="left:399.5px;top:711.34px;font-size:12px;color:#3e3e3e;font-weight:normal;font-style:normal;transform:scaleX(0.991);transform-origin:0 0;">Buque</div>
<div class="t" style="left:648.5px;top:711.34px;font-size:12px;color:#3e3e3e;font-weight:normal;font-style:normal;transform:scaleX(0.9149999999999996);transform-origin:0 0;">ANTOÑITO Y PEPITO</div>
<div class="t" style="left:850.5px;top:711.34px;font-size:12px;color:#3e3e3e;font-weight:normal;font-style:normal;transform:scaleX(0.915);transform-origin:0 0;">BORRADOR</div>
<div class="t" style="left:1015.5px;top:711.34px;font-size:12px;color:#3e3e3e;font-weight:normal;font-style:normal;transform:scaleX(0.9849999999999998);transform-origin:0 0;">10/01/2019 12:28:04</div>
<div class="t" style="left:20.5px;top:738.34px;font-size:12px;color:#4a6a8e;font-weight:normal;font-style:normal;transform:scaleX(0.94);transform-origin:0 0;">S_TI159\2019</div>
<div class="t" style="left:209.5px;top:738.34px;font-size:12px;color:#3e3e3e;font-weight:normal;font-style:normal;transform:scaleX(0.9988235294117646);transform-origin:0 0;">Tránsito Indirecto</div>
<div class="t" style="left:399.5px;top:738.34px;font-size:12px;color:#3e3e3e;font-weight:normal;font-style:normal;transform:scaleX(0.991);transform-origin:0 0;">Buque</div>
<div class="t" style="left:648.5px;top:738.34px;font-size:12px;color:#3e3e3e;font-weight:normal;font-style:normal;transform:scaleX(0.915);transform-origin:0 0;">AMA ANITA</div>
<div class="t" style="left:850.5px;top:738.34px;font-size:12px;color:#3e3e3e;font-weight:normal;font-style:normal;transform:scaleX(0.915);transform-origin:0 0;">BORRADOR</div>
<div class="t" style="left:1015.5px;top:738.34px;font-size:12px;color:#3e3e3e;font-weight:normal;font-style:normal;transform:scaleX(0.9849999999999998);transform-origin:0 0;">10/01/2019 12:14:52</div>
<div class="abs" style="left:13px;top:757px;width:1254px;height:27px;background:#e7eaf6"></div>
<div class="t" style="left:20.5px;top:765.34px;font-size:12px;color:#4a6a8e;font-weight:normal;font-style:normal;transform:scaleX(0.94);transform-origin:0 0;">S_TI154\2019</div>
<div class="t" style="left:209.5px;top:765.34px;font-size:12px;color:#3e3e3e;font-weight:normal;font-style:normal;transform:scaleX(0.9988235294117646);transform-origin:0 0;">Tránsito Indirecto</div>
<div class="t" style="left:399.5px;top:765.34px;font-size:12px;color:#3e3e3e;font-weight:normal;font-style:normal;transform:scaleX(0.991);transform-origin:0 0;">Buque</div>
<div class="t" style="left:648.5px;top:765.34px;font-size:12px;color:#3e3e3e;font-weight:normal;font-style:normal;transform:scaleX(0.915);transform-origin:0 0;">AMA ANITA</div>
<div class="t" style="left:850.5px;top:765.34px;font-size:12px;color:#3e3e3e;font-weight:normal;font-style:normal;transform:scaleX(0.915);transform-origin:0 0;">BORRADOR</div>
<div class="t" style="left:1015.5px;top:765.34px;font-size:12px;color:#3e3e3e;font-weight:normal;font-style:normal;transform:scaleX(0.9849999999999998);transform-origin:0 0;">10/01/2019 11:05:51</div>
<div class="t" style="left:20.5px;top:792.34px;font-size:12px;color:#4a6a8e;font-weight:normal;font-style:normal;transform:scaleX(0.94);transform-origin:0 0;">II1\2019</div>
<div class="t" style="left:209.5px;top:792.34px;font-size:12px;color:#3e3e3e;font-weight:normal;font-style:normal;transform:scaleX(1.0005000000000002);transform-origin:0 0;">Importación Indirecta</div>
<div class="t" style="left:399.5px;top:792.34px;font-size:12px;color:#3e3e3e;font-weight:normal;font-style:normal;transform:scaleX(0.991);transform-origin:0 0;">Buque</div>
<div class="t" style="left:648.5px;top:792.34px;font-size:12px;color:#3e3e3e;font-weight:normal;font-style:normal;transform:scaleX(0.9149999999999997);transform-origin:0 0;">ALEJANDRO JOSE</div>
<div class="t" style="left:850.5px;top:792.34px;font-size:12px;color:#3e3e3e;font-weight:normal;font-style:normal;transform:scaleX(0.9149999999999996);transform-origin:0 0;">SOLICITUD OPERADOR</div>
<div class="t" style="left:1015.5px;top:792.34px;font-size:12px;color:#3e3e3e;font-weight:normal;font-style:normal;transform:scaleX(0.9849999999999998);transform-origin:0 0;">08/01/2019 11:52:29</div>
<div class="abs" style="left:13px;top:811px;width:1254px;height:27px;background:#e7eaf6"></div>
<div class="t" style="left:20.5px;top:819.34px;font-size:12px;color:#4a6a8e;font-weight:normal;font-style:normal;transform:scaleX(0.94);transform-origin:0 0;">S_RP145\2019</div>
<div class="t" style="left:209.5px;top:819.34px;font-size:12px;color:#3e3e3e;font-weight:normal;font-style:normal;transform:scaleX(1.0026923076923075);transform-origin:0 0;">Reexportación</div>
<div class="t" style="left:399.5px;top:819.34px;font-size:12px;color:#3e3e3e;font-weight:normal;font-style:normal;transform:scaleX(0.991);transform-origin:0 0;">Avión</div>
<div class="t" style="left:648.5px;top:819.34px;font-size:12px;color:#3e3e3e;font-weight:normal;font-style:normal;transform:scaleX(1.01);transform-origin:0 0;">test</div>
<div class="t" style="left:850.5px;top:819.34px;font-size:12px;color:#3e3e3e;font-weight:normal;font-style:normal;transform:scaleX(0.915);transform-origin:0 0;">BORRADOR</div>
<div class="t" style="left:1015.5px;top:819.34px;font-size:12px;color:#3e3e3e;font-weight:normal;font-style:normal;transform:scaleX(0.9849999999999998);transform-origin:0 0;">08/01/2019 10:09:32</div>
<div class="abs" style="left:201px;top:377px;width:1px;height:461px;background:#d0d0d0"></div>
<div class="abs" style="left:391px;top:377px;width:1px;height:461px;background:#d0d0d0"></div>
<div class="abs" style="left:640px;top:377px;width:1px;height:461px;background:#d0d0d0"></div>
<div class="abs" style="left:842px;top:377px;width:1px;height:461px;background:#d0d0d0"></div>
<div class="abs" style="left:1007px;top:377px;width:1px;height:461px;background:#d0d0d0"></div>
<div class="t" style="left:-205.65px;width:600px;text-align:center;top:387.34px;font-size:12px;color:#333;font-weight:normal;font-style:normal;">Código</div>
<div class="t" style="left:-16.5px;width:600px;text-align:center;top:387.34px;font-size:12px;color:#333;font-weight:normal;font-style:normal;">Tipo de solicitud</div>
<div class="t" style="left:203.65000000000003px;width:600px;text-align:center;top:387.34px;font-size:12px;color:#333;font-weight:normal;font-style:normal;">Tipo de Transporte</div>
<div class="t" style="left:428.5px;width:600px;text-align:center;top:387.34px;font-size:12px;color:#333;font-weight:normal;font-style:normal;">Transporte</div>
<div class="t" style="left:624.5px;width:600px;text-align:center;top:387.34px;font-size:12px;color:#333;font-weight:normal;font-style:normal;">Estado</div>
<div class="t" style="right:113px;top:387.34px;font-size:12px;color:#333;font-weight:normal;font-style:normal;">Fecha Modificación</div>
<svg style="left:184.4px;top:387px" width="13" height="13" viewBox="0 0 13 13"><path d="M0,0 L12.3,0 L7.3,5.6 L7.1,11 L5.9,12.4 L5.2,12.2 L5.1,5.6 Z" fill="#222"/></svg>
<svg style="left:374.2px;top:387px" width="13" height="13" viewBox="0 0 13 13"><path d="M0,0 L12.3,0 L7.3,5.6 L7.1,11 L5.9,12.4 L5.2,12.2 L5.1,5.6 Z" fill="#222"/></svg>
<svg style="left:623.3px;top:387px" width="13" height="13" viewBox="0 0 13 13"><path d="M0,0 L12.3,0 L7.3,5.6 L7.1,11 L5.9,12.4 L5.2,12.2 L5.1,5.6 Z" fill="#222"/></svg>
<svg style="left:825.5px;top:387px" width="13" height="13" viewBox="0 0 13 13"><path d="M0,0 L12.3,0 L7.3,5.6 L7.1,11 L5.9,12.4 L5.2,12.2 L5.1,5.6 Z" fill="#222"/></svg>
<svg style="left:990px;top:387px" width="13" height="13" viewBox="0 0 13 13"><path d="M0,0 L12.3,0 L7.3,5.6 L7.1,11 L5.9,12.4 L5.2,12.2 L5.1,5.6 Z" fill="#222"/></svg>
<svg style="left:1250.3px;top:387px" width="13" height="13" viewBox="0 0 13 13"><path d="M0,0 L12.3,0 L7.3,5.6 L7.1,11 L5.9,12.4 L5.2,12.2 L5.1,5.6 Z" fill="#222"/></svg>
<svg style="left:1171.5px;top:387px" width="8" height="12" viewBox="0 0 8 12"><path d="M4,0 L4,8" stroke="#3a7ab8" stroke-width="1.2"/><path d="M0.5,7 L7.5,7 L4,11.5 Z" fill="#3a7ab8"/></svg>
<div class="abs" style="left:13px;top:838px;width:1254px;height:34px;background:#f4f4f4;border-top:1px solid #c8c8c8;border-radius:0 0 4px 4px"></div>
<div class="abs" style="left:16.5px;top:843px;width:202px;height:25.5px;background:#fff;border:1px solid #d4d4d4;border-radius:4px"></div>
<div class="abs" style="left:41px;top:844px;width:1px;height:24px;background:#dcdcdc"></div>
<div class="abs" style="left:118px;top:844px;width:1px;height:24px;background:#dcdcdc"></div>
<div class="abs" style="left:143px;top:844px;width:1px;height:24px;background:#dcdcdc"></div>
<div class="abs" style="left:168px;top:844px;width:1px;height:24px;background:#dcdcdc"></div>
<div class="abs" style="left:193px;top:844px;width:1px;height:24px;background:#dcdcdc"></div>
<div class="abs" style="left:67px;top:843px;width:26px;height:25.5px;background:#3a87c8"></div>
<div class="t" style="left:76.2px;top:850.00px;font-size:13px;color:#fff;font-weight:normal;font-style:normal;">1</div>
<div class="t" style="left:102.2px;top:850.00px;font-size:13px;color:#555;font-weight:normal;font-style:normal;">2</div>
<div class="t" style="left:127.6px;top:850.00px;font-size:13px;color:#555;font-weight:normal;font-style:normal;">3</div>
<div class="t" style="left:152.6px;top:850.00px;font-size:13px;color:#555;font-weight:normal;font-style:normal;">4</div>
<svg style="left:24.5px;top:853px" width="9" height="9" viewBox="0 0 9 9"><rect x="0" y="0" width="1.5" height="8" fill="#8aaacc"/><path d="M7.5,0 L7.5,8 L1.5,4 Z" fill="#8aaacc"/></svg>
<svg style="left:51px;top:853px" width="7" height="9" viewBox="0 0 7 9"><path d="M6,0 L6,8 L0.3,4 Z" fill="#8aaacc"/></svg>
<svg style="left:178px;top:853.5px" width="7" height="9" viewBox="0 0 7 9"><path d="M0,0 L0,7.5 L5.8,3.75 Z" fill="#5a84b4"/></svg>
<svg style="left:202px;top:853px" width="9" height="9" viewBox="0 0 9 9"><path d="M0,0 L0,8 L5.8,4 Z" fill="#5a84b4"/><rect x="5.8" y="0" width="1.5" height="8" fill="#5a84b4"/></svg>
<div class="t" style="right:23px;top:850.24px;font-size:12px;color:#999;font-weight:normal;font-style:normal;transform:scaleX(0.9869138495092693);transform-origin:100% 0;">Elementos mostrados 1 - 16 de 50</div>
<div class="abs" style="left:869px;top:287px;width:290px;height:206px;background:#fff;border:1px solid rgba(0,0,0,.15);border-top:none;border-radius:0 0 4px 4px;box-shadow:0 6px 12px rgba(0,0,0,.175)"></div>
<div class="t" style="left:873.4px;top:292.62px;font-size:12.5px;color:#333;font-weight:bold;font-style:normal;transform:scaleX(0.99);transform-origin:0 0;">Nombre</div>
<div class="t" style="left:1013.8px;top:292.62px;font-size:12.5px;color:#333;font-weight:bold;font-style:normal;">NIF</div>
<div class="t" style="left:1081px;top:292.62px;font-size:12.5px;color:#333;font-weight:bold;font-style:normal;">País</div>
<div class="abs" style="left:873px;top:307px;width:265px;height:63px;background:#fff;border:1px solid #86b0d8;border-radius:3px;box-shadow:inset 0 0 6px rgba(82,150,220,.55)"></div>
<div class="t" style="left:878.2px;top:311.64px;font-size:12px;color:#4a4a4a;font-weight:normal;font-style:normal;transform:scaleX(0.9000000000000002);transform-origin:0 0;">DALIAN FUDAO</div>
<div class="t" style="left:878.2px;top:332.64px;font-size:12px;color:#4a4a4a;font-weight:normal;font-style:normal;transform:scaleX(0.9000000000000002);transform-origin:0 0;">AQUATIC PRODUCTS</div>
<div class="t" style="left:878.2px;top:353.34px;font-size:12px;color:#4a4a4a;font-weight:normal;font-style:normal;transform:scaleX(0.9000000000000002);transform-origin:0 0;">AND FOOD CO LTD</div>
<div class="t" style="left:878.2px;top:377.54px;font-size:12px;color:#4a4a4a;font-weight:normal;font-style:normal;transform:scaleX(0.9000000000000002);transform-origin:0 0;">DANDONG JINCHANG</div>
<div class="t" style="left:878.2px;top:398.24px;font-size:12px;color:#4a4a4a;font-weight:normal;font-style:normal;transform:scaleX(0.9000000000000002);transform-origin:0 0;">SEAFOODS CO., LTD</div>
<div class="t" style="left:878.2px;top:421.64px;font-size:12px;color:#4a4a4a;font-weight:normal;font-style:normal;transform:scaleX(1.0);transform-origin:0 0;">eurl dahmoun fish imp-</div>
<div class="t" style="left:878.2px;top:441.84px;font-size:12px;color:#4a4a4a;font-weight:normal;font-style:normal;transform:scaleX(1.0);transform-origin:0 0;">exp</div>
<div class="t" style="left:1069.7px;top:332.64px;font-size:12px;color:#444;font-weight:normal;font-style:normal;transform:scaleX(0.9);transform-origin:0 0;">CHINA</div>
<div class="t" style="left:1069.7px;top:387.24px;font-size:12px;color:#444;font-weight:normal;font-style:normal;transform:scaleX(0.9);transform-origin:0 0;">CHINA</div>
<div class="t" style="left:1069.7px;top:431.34px;font-size:12px;color:#444;font-weight:normal;font-style:normal;transform:scaleX(0.9000000000000001);transform-origin:0 0;">ARGELIA</div>
<div class="abs" style="left:1139px;top:306px;width:17px;height:152px;background:#f0f0f0"></div>
<div class="abs" style="left:1141px;top:323px;width:13px;height:17px;background:#c1c1c1"></div>
<svg style="left:1143px;top:311px" width="9" height="6" viewBox="0 0 9 6"><path d="M0,5 L9,5 L4.5,0.5 Z" fill="#a3a3a3"/></svg>
<svg style="left:1143px;top:446px" width="9" height="6" viewBox="0 0 9 6"><path d="M0,0.5 L9,0.5 L4.5,5 Z" fill="#505050"/></svg>
<div class="t" style="left:872.7px;top:460.64px;font-size:12px;color:#333;font-weight:normal;font-style:normal;transform:scaleX(0.9783029833397907);transform-origin:0 0;">Se muestran los 100 primeros Exportadores que</div>
<div class="t" style="left:872.7px;top:477.14px;font-size:12px;color:#333;font-weight:normal;font-style:normal;transform:scaleX(0.9783029833397907);transform-origin:0 0;">coinciden con la búsqueda</div>
</body></html>
